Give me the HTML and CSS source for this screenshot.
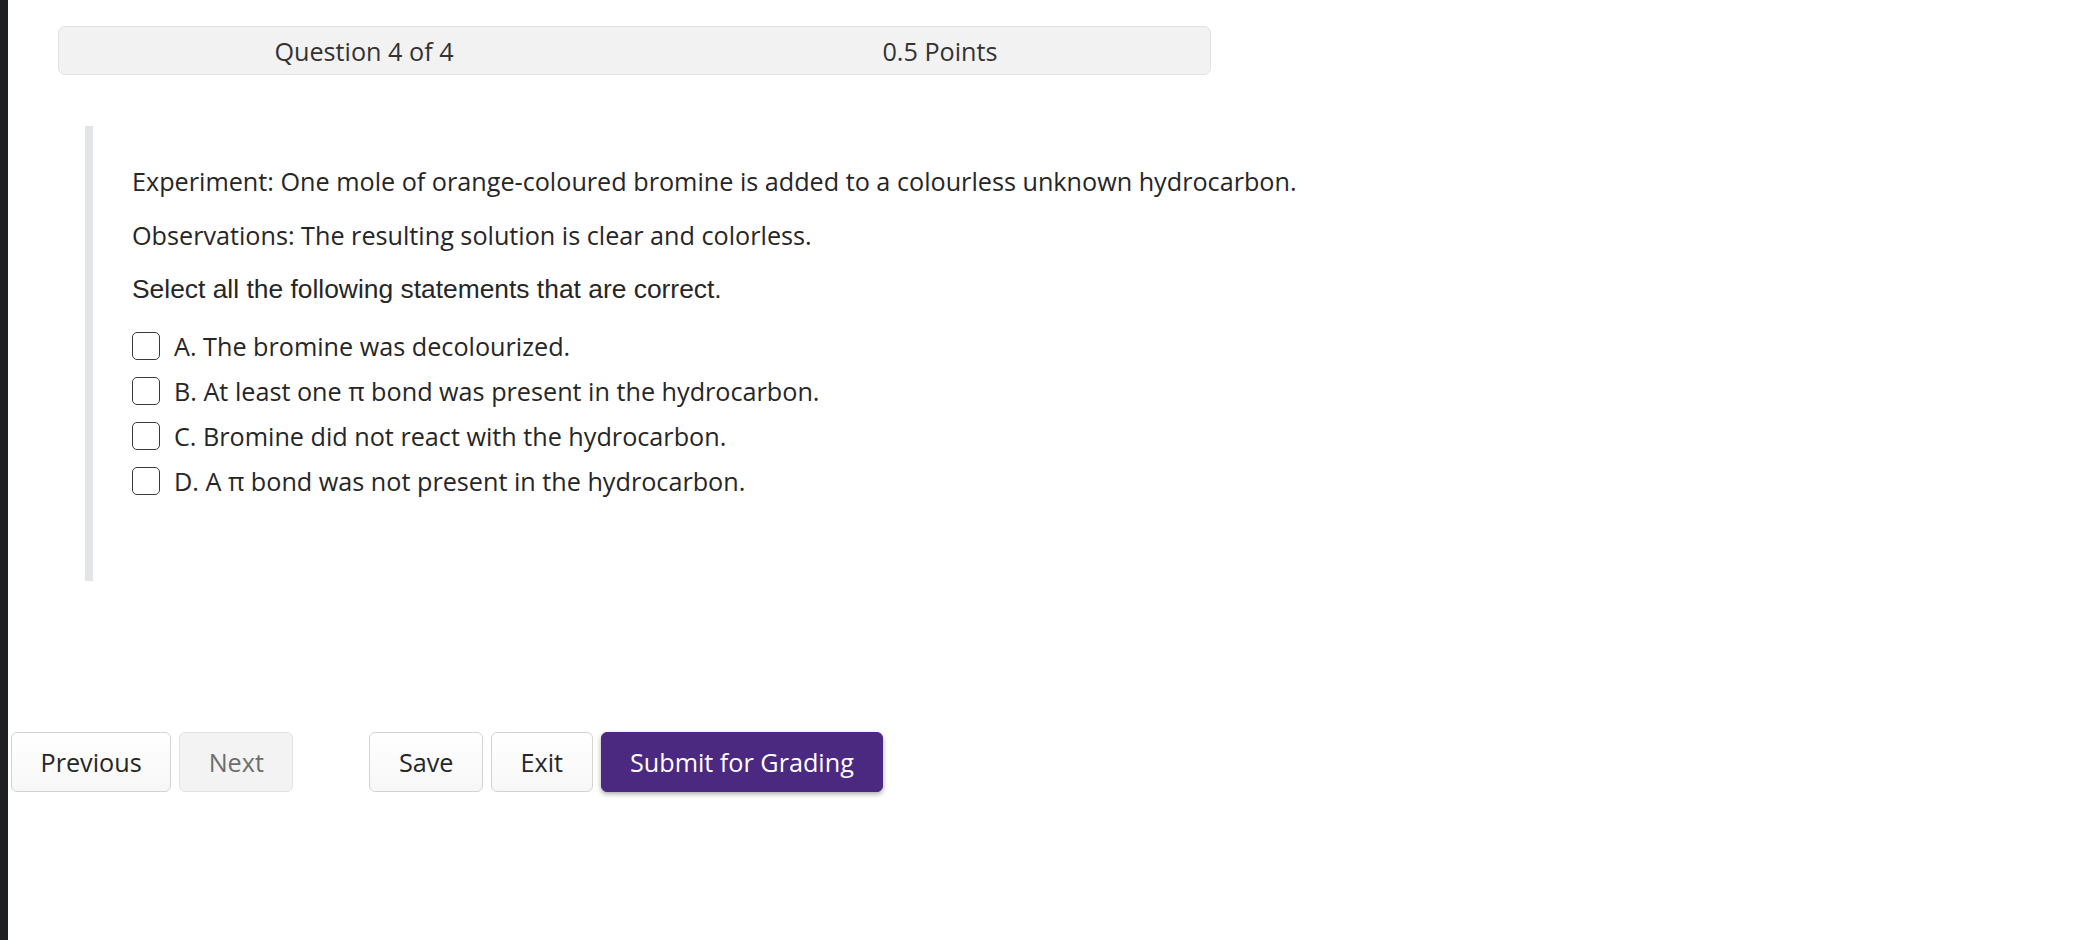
FILE: index.html
```html
<!DOCTYPE html>
<html lang="en">
<head>
<meta charset="utf-8">
<title>Question 4 of 4</title>
<link rel="stylesheet" href="styles.css">
</head>
<body>
<div class="page">
  <div class="edge"></div>
  <main class="main">
    <div class="qheader">
      <div class="qcell">Question 4 of 4</div>
      <div class="qcell">0.5 Points</div>
    </div>
    <section class="question">
      <p class="para">Experiment: One mole of orange-coloured bromine is added to a colourless unknown hydrocarbon.</p>
      <p class="para">Observations: The resulting solution is clear and colorless.</p>
      <p class="para prompt">Select all the following statements that are correct.</p>
      <ul class="options">
        <li class="option"><span class="box"></span><span>A. The bromine was decolourized.</span></li>
        <li class="option"><span class="box"></span><span>B. At least one π bond was present in the hydrocarbon.</span></li>
        <li class="option"><span class="box"></span><span>C. Bromine did not react with the hydrocarbon.</span></li>
        <li class="option"><span class="box"></span><span>D. A π bond was not present in the hydrocarbon.</span></li>
      </ul>
    </section>
    <div class="actions">
      <div class="group">
        <button class="btn">Previous</button>
        <button class="btn btn-disabled">Next</button>
      </div>
      <div class="group group-right">
        <button class="btn">Save</button>
        <button class="btn">Exit</button>
        <button class="btn btn-primary">Submit for Grading</button>
      </div>
    </div>
  </main>
</div>
</body>
</html>
```

FILE: styles.css
```css
html, body {
  margin: 0;
  padding: 0;
  background: #ffffff;
}
body {
  font-family: "Open Sans", "Noto Sans", sans-serif;
  color: #262626;
  font-size: 25.2px;
}
.page {
  display: flex;
  min-height: 940px;
}
.edge {
  width: 8px;
  flex: 0 0 8px;
  background: #1f2024;
}
.main {
  flex: 1;
  padding-top: 26px;
}
.qheader {
  margin-left: 50px;
  width: 1153px;
  height: 49px;
  box-sizing: border-box;
  background: #f2f2f2;
  border: 1px solid #e2e2e2;
  border-radius: 7px;
  display: flex;
  align-items: center;
  color: #333333;
}
.qcell {
  flex: 0 0 576px;
  text-align: center;
  padding-left: 34px;
  box-sizing: border-box;
  line-height: 30px;
}
.question {
  margin: 51px 0 0 77px;
  border-left: 8px solid #e3e4e6;
  padding: 37px 0 82px 39px;
}
.para {
  margin: 0 0 18px;
  line-height: 36px;
}
.prompt {
  font-family: "Liberation Sans", Arial, sans-serif;
  font-size: 26.4px;
  margin-bottom: 21px;
}
.options {
  list-style: none;
  margin: 0;
  padding: 0;
  display: flex;
  flex-direction: column;
  gap: 9px;
}
.option {
  display: flex;
  align-items: center;
  height: 36px;
  line-height: 36px;
}
.box {
  width: 28px;
  height: 28px;
  box-sizing: border-box;
  border: 1.5px solid #3a3a3a;
  border-radius: 5px;
  margin-right: 14px;
  flex: 0 0 auto;
  background: #fff;
}
.actions {
  display: flex;
  margin: 151px 0 0 3px;
}
.group {
  display: flex;
  gap: 8px;
}
.group-right {
  margin-left: 76px;
}
.btn {
  font-family: "Open Sans", "Noto Sans", sans-serif;
  font-size: 25.2px;
  height: 60px;
  padding: 0 28.5px;
  border: 1px solid #d3d3d3;
  border-radius: 6px;
  background: linear-gradient(#ffffff, #f7f7f7);
  color: #262626;
  line-height: 58px;
  cursor: pointer;
}
.btn-disabled {
  background: #f3f3f3;
  border-color: #e2e2e2;
  color: #6e6e6e;
}
.btn-primary {
  background: #4b2981;
  border-color: #4b2981;
  color: #ffffff;
  box-shadow: 0 2px 5px rgba(0, 0, 0, 0.35);
}
```
